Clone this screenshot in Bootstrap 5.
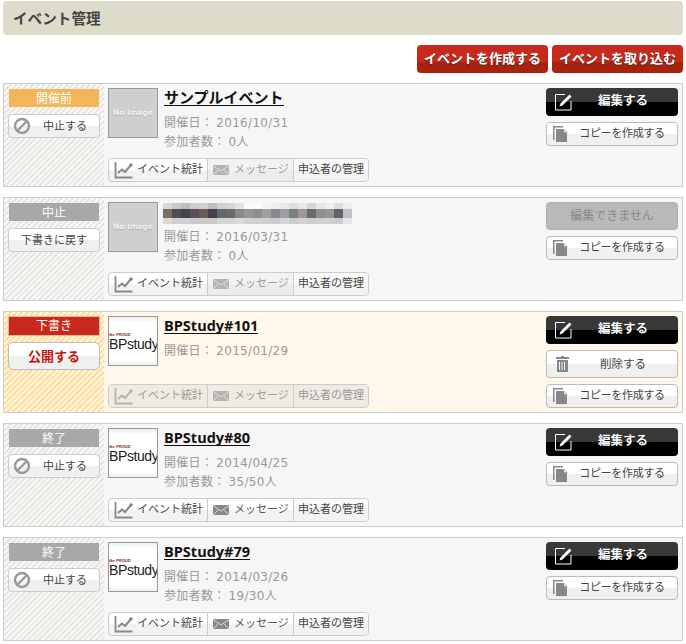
<!DOCTYPE html>
<html lang="ja"><head><meta charset="utf-8"><title>イベント管理</title>
<link href="https://cdn.jsdelivr.net/npm/bootstrap@5.3.0/dist/css/bootstrap.min.css" rel="stylesheet">
<style>
body{background:#fff;font-family:"DejaVu Sans","Noto Sans CJK JP",sans-serif;font-size:12px;color:#444;margin:0;padding:1px 3px 0}
.pagehead{height:34px;background:#dddccb;border-radius:4px;font-size:14.600px;font-weight:700;color:#444;padding:0 10px;line-height:35px}
.topacts{height:48px;padding-top:10px}
.redbtn{width:131px;height:28px;border-radius:4px;border:0;background:linear-gradient(#c9291a 0 60%,#a8220e 60%);color:#fff;font-weight:700;font-size:13px;text-shadow:0 1px 1px #333;padding:0;line-height:26px}
.evrow{border:1px solid #ccc;background:#f6f6f6;margin-bottom:10px;height:104px}
.evrow.draft{background:#fff7ea;height:102px}
.leftcol{width:100px;flex:none;padding:5px 4px 0 4px;background:repeating-linear-gradient(135deg,#e6e6e2 0 2px,#f8f8f6 2px 4px)}
.draft .leftcol{background:repeating-linear-gradient(135deg,#fedfa0 0 2px,#fff3dc 2px 4px);padding:4px 4px 0 4px}
.stat{height:18px;line-height:20px;text-align:center;color:#fff;font-size:12px;background:#a8a8a8;margin:0 0 7px 1px;width:90px}
.stat.pre{background:#f3b45a}
.stat.dr{background:#c9291a;width:92px;height:20px;margin:0 0 6px 0;border:1px solid #e3b9a0;line-height:18px}
.softbtn{display:flex;align-items:center;border:1px solid #ccc;border-radius:4px;background:linear-gradient(#fff 0 50%,#f0f0f0 50%);color:#444;font-size:11px;height:24px;padding:0;width:92px;line-height:1}
.softbtn .lbl{flex:1;text-align:center}
.softbtn svg{flex:none}
.softbtn.pub{height:28px;color:#c4150c;font-weight:700;font-size:13px;border-color:#bbb;border-radius:5px}
.midcol{flex:1;min-width:0;padding:4px 0 0 4px;display:flex;flex-direction:column}
.thumbbox{width:50px;height:50px;flex:none;border:1px solid #999;background:#cfcfcf;color:#f2f2f2;font-size:7.500px;font-weight:700;display:flex;align-items:center;justify-content:center;text-shadow:0 1px 1px #aaa;white-space:nowrap;overflow:hidden}
.thumbbox.logo{background:linear-gradient(#eee,#fff 12%,#fff 88%,#eee);color:#222;flex-direction:column;align-items:flex-start;justify-content:flex-start;text-shadow:none;font-weight:400;font-size:14px;line-height:15px;font-family:"Liberation Sans",sans-serif;letter-spacing:-.4px;padding-top:15px}
.logotop{display:block;height:5px;font-size:4px;line-height:5px;font-style:italic;color:#7a1a10;letter-spacing:0;font-weight:700}
.infobox{padding-left:6px;min-width:0}
.evname{display:inline-block;font-family:"Open Sans","Noto Sans CJK JP",sans-serif;font-size:15px;font-weight:700;color:#111;border-bottom:1px solid #111;text-decoration:none;line-height:15px;margin-top:2px;height:16px;white-space:nowrap}
.evname.lat{font-size:14.500px}
.meta{color:#999;font-size:12px;line-height:19px;letter-spacing:.3px;word-spacing:-1px;white-space:nowrap}
.firstmeta{margin-top:6px}
.aftermosaic{margin-top:4px}
.mosaic{width:189px;height:21px;margin:1px 0 0 -1px;background:
linear-gradient(90deg,#d8d6d6 0 9px,#c8c8ce 9px 18px,#bdbcbe 18px 27px,#ccccd2 27px 36px,#d6d0d0 36px 45px,#c4bcc0 45px 54px,#d0d2d0 54px 63px,#d6d6d2 63px 72px,#e2e4e2 72px 81px,#fbfbfb 81px 99px,#f4f4f4 99px 108px,#eeeff0 108px 117px,#e8e9ea 117px 126px,#dfdfdf 126px 135px,#e8e8e6 135px 144px,#d4d8d8 144px 153px,#e6e6e6 153px 162px,#eee 162px 171px,#dedede 171px 180px,#eceff0 180px 189px) 0 0/100% 6px no-repeat,
linear-gradient(90deg,#7b6e66 0 9px,#4d5053 9px 18px,#43444b 18px 27px,#5a4f5a 27px 36px,#6a5a5e 36px 45px,#46414d 45px 54px,#62686c 54px 63px,#6c6a66 63px 72px,#86898a 72px 81px,#9a9690 81px 90px,#8e8e90 90px 99px,#a0a09e 99px 108px,#86888a 108px 117px,#9c9ea6 117px 126px,#7c7e80 126px 135px,#a09894 135px 144px,#666c6e 144px 153px,#8e8e90 153px 162px,#969696 162px 171px,#646468 171px 180px,#bcc2c8 180px 189px) 0 6px/100% 9px no-repeat,
linear-gradient(90deg,#e0d8d4 0 9px,#ccd0d0 9px 18px,#cdd0d6 18px 27px,#cbc8ca 27px 36px,#ccc8c8 36px 45px,#cec8cc 45px 54px,#d4d4d2 54px 72px,#dadada 72px 81px,#d2d2d2 81px 90px,#d0d0d0 90px 99px,#cecece 99px 108px,#ccc 108px 117px,#d4d6da 117px 126px,#cdcdcd 126px 135px,#d4d0d0 135px 144px,#cdcfcf 144px 153px,#d0d0d0 153px 171px,#ccc 171px 180px,#e4e6e8 180px 189px) 0 15px/100% 6px no-repeat}
.tools{margin-top:auto;margin-bottom:4px;display:inline-flex;align-self:flex-start;height:24px;border:1px solid #ccc;border-radius:4px;background:linear-gradient(#fff 0 50%,#f2f2f2 50%);font-size:11px;color:#444;overflow:hidden}
.tools>div{display:flex;align-items:center;white-space:nowrap;border-left:1px solid #ccc;height:100%}
.tools svg{color:#888;flex:none}
.tools>div:first-child{border-left:0;width:98px;padding-left:5px;gap:3px}
.tools .t2{width:86px;padding-left:5px;gap:5px;color:#999;background:linear-gradient(#f2f2f2 0 50%,#ebebeb 50%)}
.tools .t2 svg{color:#b4b4b4}
.tools .t3{width:75px;justify-content:center;background:linear-gradient(#fafafa 0 50%,#f2f2f2 50%)}
.tools.off{background:#f0ebe2;color:#aaa}
.tools.off>div{background:#f0ebe2;color:#999}
.tools.off svg{color:#b4b4b0}
.tools.on2 .t2{color:#555;background:linear-gradient(#fff 0 50%,#f2f2f2 50%)}
.tools.on2 .t2 svg{color:#888}
.rightcol{width:132px;flex:none;margin-right:4px;padding-top:4px;display:flex;flex-direction:column;gap:6px}
.rbtn{width:132px;height:28px;border-radius:4px;display:flex;align-items:center;font-size:11px}
.rbtn .lbl{flex:1;text-align:center;padding-top:1px}
.rbtn svg{flex:none}
.rbtn.edit{background:linear-gradient(#383838 0 50%,#000 50%);color:#fff;font-weight:700;font-size:12.500px;text-shadow:0 1px 1px #000}
.rbtn.edit svg{margin-left:9px}
.rbtn.edit .lbl{padding:0 4px 2px 0}
.rbtn.no{background:#b9b9b9;color:#888;font-size:12px;border:1px solid #b0b0b0;justify-content:center}
.rbtn.copy{height:24px;border:1px solid #bbb;background:linear-gradient(#fff 0 50%,#f0f0f0 50%);color:#444}
.rbtn.copy svg{margin-left:6px}
.rbtn.copy .lbl{letter-spacing:-.3px;padding-right:1px}
.rbtn.del{border:1px solid #bbb;background:linear-gradient(#fff 0 50%,#f0f0f0 50%);color:#444;font-size:11.500px}
.rbtn.del svg{margin-left:9px}
</style></head><body>
<svg width="0" height="0" class="d-block"><defs>
<symbol id="ban" viewBox="0 0 18 18"><circle cx="9" cy="9" r="7" fill="none" stroke="#999" stroke-width="2.400"/><path d="M4 14 14 4" stroke="#999" stroke-width="2.400"/></symbol>
<symbol id="graph" viewBox="0 0 20 18"><path d="M1.500 1v15.500h17" fill="none" stroke="currentColor" stroke-width="1.800"/><path d="M4 12 8 8.500 11 11 17 4" fill="none" stroke="currentColor" stroke-width="2"/><circle cx="17" cy="4" r="1.800" fill="currentColor"/></symbol>
<symbol id="mail" viewBox="0 0 16 10"><path d="M0 0h16v10H0z" fill="currentColor"/><path d="M0 .5 8 6l8-5.500M0 10l5.500-5.500M16 10l-5.500-5.500" fill="none" stroke="#eee" stroke-width=".8"/></symbol>
<symbol id="pen" viewBox="0 0 17 17"><path d="M10 .5H.5v15.500H16V7" fill="none" stroke="#fff" stroke-width="1"/><path d="M14.500 .5 16.500 2.500 7.500 11.500l-3 1 1-3z" fill="#fff"/></symbol>
<symbol id="copy" viewBox="0 0 15 16"><path d="M0 0h10v1.500H1.500V14H0z" fill="#888"/><path d="M3 3h7l4 4v9H3z" fill="#888"/><path d="M11 3 14.500 6.500H11z" fill="#fff" stroke="#888" stroke-width=".5"/></symbol>
<symbol id="trash" viewBox="0 0 13 16"><path d="M5 0h3v1h5v2H0V1h5zM1 4h11v12H1zM3 6v8h1V6zm2.500 0v8h1V6zM8 6v8h1V6z" fill="#888" fill-rule="evenodd"/></symbol>
</defs></svg>

<div class="pagehead">イベント管理</div>
<div class="topacts d-flex justify-content-end gap-1">
<button class="redbtn" type="button">イベントを作成する</button>
<button class="redbtn" type="button">イベントを取り込む</button>
</div>

<div class="evrow d-flex">
 <div class="leftcol"><div class="stat pre">開催前</div><div class="softbtn"><svg width="18" height="18" class="ms-1"><use href="#ban"/></svg><span class="lbl">中止する</span></div></div>
 <div class="midcol"><div class="d-flex"><div class="thumbbox">No Image</div><div class="infobox"><a class="evname" href="#">サンプルイベント</a><div class="meta firstmeta">開催日： 2016/10/31</div><div class="meta">参加者数： 0人</div></div></div>
 <div class="tools"><div><svg width="20" height="18"><use href="#graph"/></svg>イベント統計</div><div class="t2"><svg width="16" height="10"><use href="#mail"/></svg>メッセージ</div><div class="t3">申込者の管理</div></div></div>
 <div class="rightcol"><div class="rbtn edit"><svg width="17" height="17"><use href="#pen"/></svg><span class="lbl">編集する</span></div><div class="rbtn copy"><svg width="15" height="16"><use href="#copy"/></svg><span class="lbl">コピーを作成する</span></div></div>
</div>

<div class="evrow d-flex">
 <div class="leftcol"><div class="stat">中止</div><div class="softbtn"><span class="lbl">下書きに戻す</span></div></div>
 <div class="midcol"><div class="d-flex"><div class="thumbbox">No Image</div><div class="infobox"><div class="mosaic"></div><div class="meta aftermosaic">開催日： 2016/03/31</div><div class="meta">参加者数： 0人</div></div></div>
 <div class="tools"><div><svg width="20" height="18"><use href="#graph"/></svg>イベント統計</div><div class="t2"><svg width="16" height="10"><use href="#mail"/></svg>メッセージ</div><div class="t3">申込者の管理</div></div></div>
 <div class="rightcol"><div class="rbtn no">編集できません</div><div class="rbtn copy"><svg width="15" height="16"><use href="#copy"/></svg><span class="lbl">コピーを作成する</span></div></div>
</div>

<div class="evrow draft d-flex">
 <div class="leftcol"><div class="stat dr">下書き</div><div class="softbtn pub"><span class="lbl">公開する</span></div></div>
 <div class="midcol"><div class="d-flex"><div class="thumbbox logo"><span class="logotop">fbe PROUD</span>BPstudy</div><div class="infobox"><a class="evname lat" href="#">BPStudy#101</a><div class="meta firstmeta">開催日： 2015/01/29</div></div></div>
 <div class="tools off"><div><svg width="20" height="18"><use href="#graph"/></svg>イベント統計</div><div class="t2"><svg width="16" height="10"><use href="#mail"/></svg>メッセージ</div><div class="t3">申込者の管理</div></div></div>
 <div class="rightcol"><div class="rbtn edit"><svg width="17" height="17"><use href="#pen"/></svg><span class="lbl">編集する</span></div><div class="rbtn del"><svg width="13" height="16"><use href="#trash"/></svg><span class="lbl">削除する</span></div><div class="rbtn copy"><svg width="15" height="16"><use href="#copy"/></svg><span class="lbl">コピーを作成する</span></div></div>
</div>

<div class="evrow d-flex">
 <div class="leftcol"><div class="stat">終了</div><div class="softbtn"><svg width="18" height="18" class="ms-1"><use href="#ban"/></svg><span class="lbl">中止する</span></div></div>
 <div class="midcol"><div class="d-flex"><div class="thumbbox logo"><span class="logotop">fbe PROUD</span>BPstudy</div><div class="infobox"><a class="evname lat" href="#">BPStudy#80</a><div class="meta firstmeta">開催日： 2014/04/25</div><div class="meta">参加者数： 35/50人</div></div></div>
 <div class="tools on2"><div><svg width="20" height="18"><use href="#graph"/></svg>イベント統計</div><div class="t2"><svg width="16" height="10"><use href="#mail"/></svg>メッセージ</div><div class="t3">申込者の管理</div></div></div>
 <div class="rightcol"><div class="rbtn edit"><svg width="17" height="17"><use href="#pen"/></svg><span class="lbl">編集する</span></div><div class="rbtn copy"><svg width="15" height="16"><use href="#copy"/></svg><span class="lbl">コピーを作成する</span></div></div>
</div>

<div class="evrow d-flex">
 <div class="leftcol"><div class="stat">終了</div><div class="softbtn"><svg width="18" height="18" class="ms-1"><use href="#ban"/></svg><span class="lbl">中止する</span></div></div>
 <div class="midcol"><div class="d-flex"><div class="thumbbox logo"><span class="logotop">fbe PROUD</span>BPstudy</div><div class="infobox"><a class="evname lat" href="#">BPStudy#79</a><div class="meta firstmeta">開催日： 2014/03/26</div><div class="meta">参加者数： 19/30人</div></div></div>
 <div class="tools on2"><div><svg width="20" height="18"><use href="#graph"/></svg>イベント統計</div><div class="t2"><svg width="16" height="10"><use href="#mail"/></svg>メッセージ</div><div class="t3">申込者の管理</div></div></div>
 <div class="rightcol"><div class="rbtn edit"><svg width="17" height="17"><use href="#pen"/></svg><span class="lbl">編集する</span></div><div class="rbtn copy"><svg width="15" height="16"><use href="#copy"/></svg><span class="lbl">コピーを作成する</span></div></div>
</div>
<script src="https://cdn.jsdelivr.net/npm/bootstrap@5.3.0/dist/js/bootstrap.bundle.min.js"></script>
</body></html>
